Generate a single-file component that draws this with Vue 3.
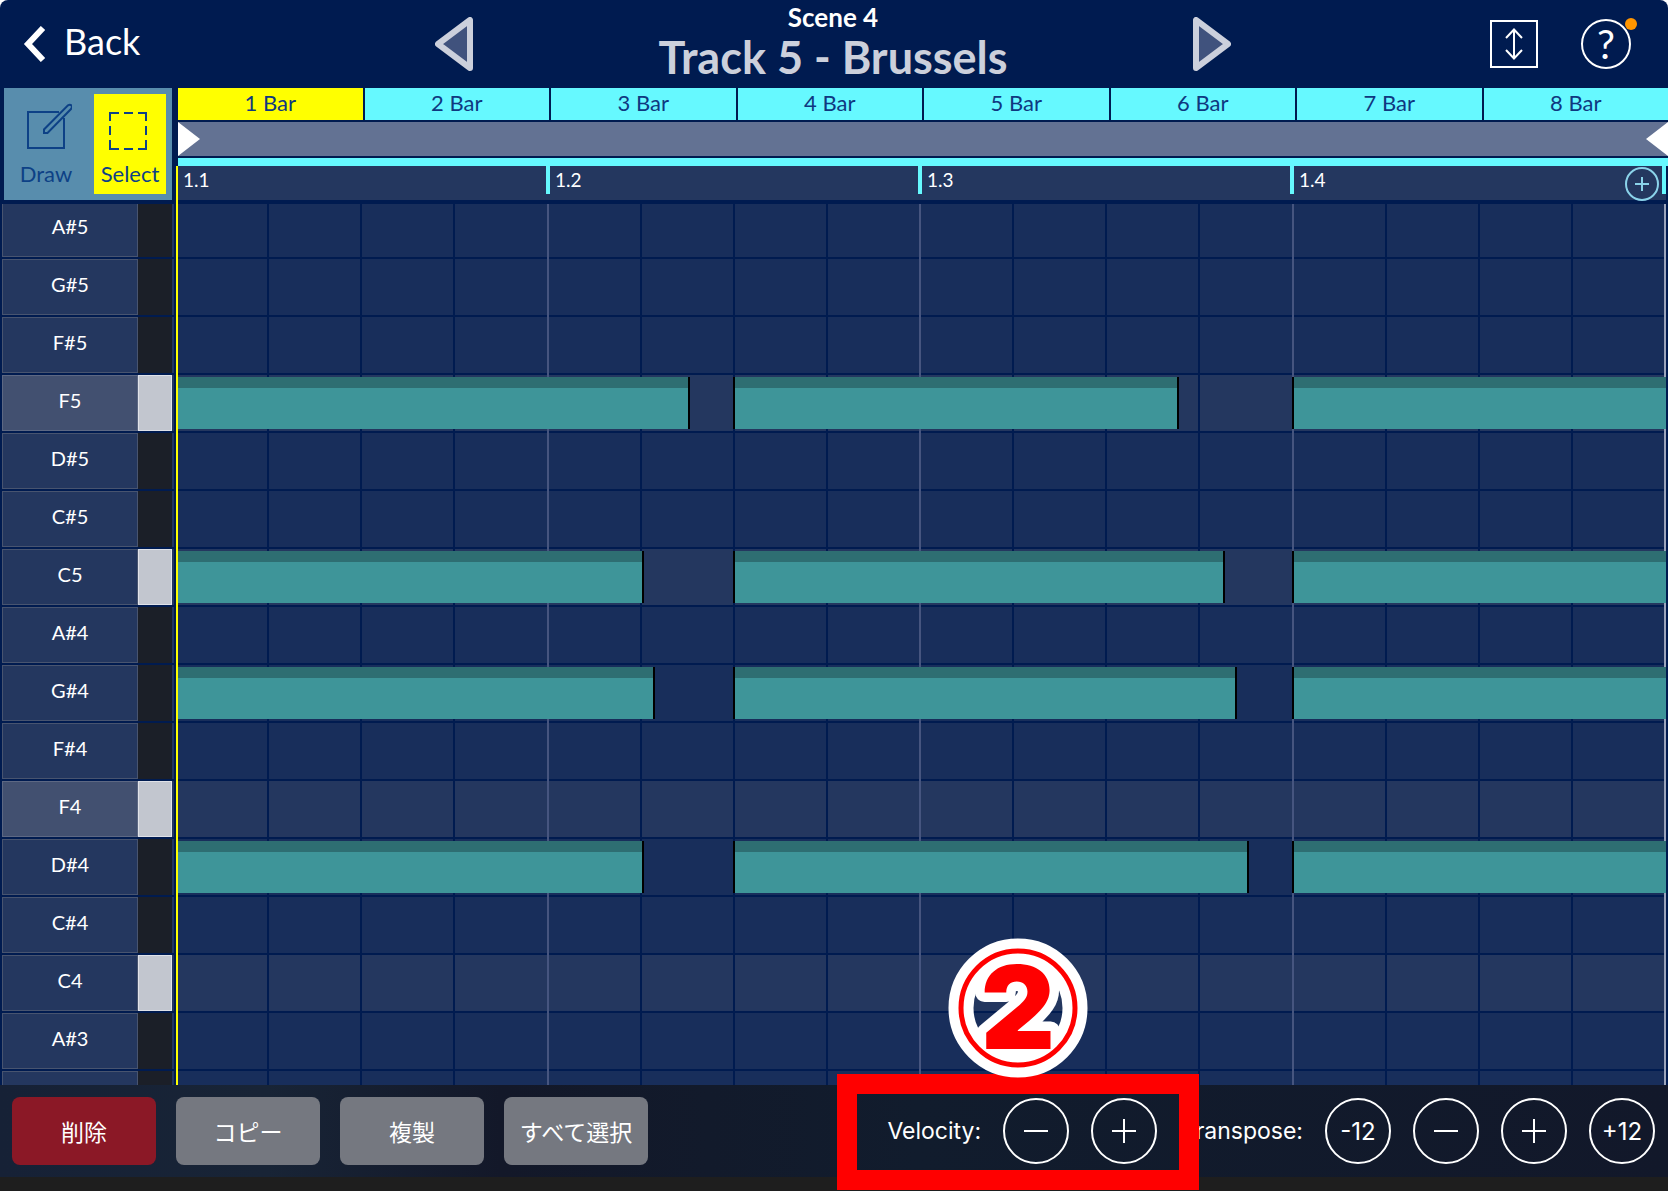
<script setup>
import { ref } from "vue";

const modo = ref("select");
const compasso = ref(1);
const compassos = [1, 2, 3, 4, 5, 6, 7, 8];
const tempos = ["1.1", "1.2", "1.3", "1.4"];
const PASSOS = 16;

// inicio e fim das notas em semicolcheias
const linhas = [
  { nome: "A#5" },
  { nome: "G#5" },
  { nome: "F#5" },
  { nome: "F5", branca: true, raiz: true, notas: [[0, 5.52], [6, 10.79], [12, 16]] },
  { nome: "D#5" },
  { nome: "C#5" },
  { nome: "C5", branca: true, notas: [[0, 5.03], [6, 11.29], [12, 16]] },
  { nome: "A#4" },
  { nome: "G#4", notas: [[0, 5.14], [6, 11.41], [12, 16]] },
  { nome: "F#4" },
  { nome: "F4", branca: true, raiz: true },
  { nome: "D#4", notas: [[0, 5.03], [6, 11.54], [12, 16]] },
  { nome: "C#4" },
  { nome: "C4", branca: true },
  { nome: "A#3" },
  { nome: "" }
];

function posicao([inicio, fim]) {
  return {
    left: (inicio / PASSOS) * 100 + "%",
    width: ((fim - inicio) / PASSOS) * 100 + "%"
  };
}
</script>

<template>
  <div class="app">
    <header class="topo">
      <button class="voltar">
        <svg width="24" height="36" viewBox="0 0 24 36"><path d="M20 2 L5 18 L20 34" fill="none" stroke="#fff" stroke-width="6" /></svg>
        <span>Back</span>
      </button>
      <div class="faixa">
        <button aria-label="Previous track">
          <svg width="38" height="54" viewBox="0 0 38 54"><path d="M35 3 V51 L3 27 Z" fill="#40527d" stroke="#ccd0dc" stroke-width="6" stroke-linejoin="round" /></svg>
        </button>
        <div class="titulo">
          <p>Scene 4</p>
          <h1>Track 5 - Brussels</h1>
        </div>
        <button aria-label="Next track">
          <svg width="38" height="54" viewBox="0 0 38 54"><path d="M3 3 V51 L35 27 Z" fill="#40527d" stroke="#ccd0dc" stroke-width="6" stroke-linejoin="round" /></svg>
        </button>
      </div>
      <div class="icones">
        <button aria-label="Expand">
          <svg width="48" height="48" viewBox="0 0 48 48" fill="none" stroke="#fff"><rect x="1" y="1" width="46" height="46" stroke-width="2" /><path d="M24 9.500 V38.500 M16 18 L24 9.500 L32 18 M16 30 L24 38.500 L32 30" stroke-width="2" /></svg>
        </button>
        <button class="ajuda" aria-label="Help">
          <span>?</span>
          <i class="aviso"></i>
        </button>
      </div>
    </header>

    <section class="cabecalho">
      <div class="ferramentas">
        <button :class="{ ativo: modo === 'draw' }" @click="modo = 'draw'">
          <svg width="52" height="48" viewBox="-6 1 52 48" fill="none" stroke="#0d4186" stroke-width="2"><path d="M33 10 H2 V46 H38 V16" /><path d="M18 31 V27.500 L42 3.300 Q44 2 45.500 3.500 Q46.500 5 45 7 L21.500 31 Z" /></svg>
          <span>Draw</span>
        </button>
        <button :class="{ ativo: modo === 'select' }" @click="modo = 'select'">
          <svg width="48" height="48" viewBox="2 1 48 48" fill="none" stroke="#0d4186" stroke-width="2"><path d="M6 19 V11 H15 M20 11 H29 M34 11 H42 V19 M42 24 V33 M42 38 V47 H34 M29 47 H20 M15 47 H6 V38 M6 33 V24" /></svg>
          <span>Select</span>
        </button>
      </div>
      <div class="linha-tempo">
        <nav class="compassos">
          <button v-for="n in compassos" :key="n" :class="{ ativo: n === compasso }" @click="compasso = n">{{ n }} Bar</button>
        </nav>
        <div class="intervalo">
          <svg width="22" height="34" viewBox="0 0 22 34"><path d="M0 0 L22 17 L0 34 Z" fill="#fff" /></svg>
          <svg width="22" height="34" viewBox="0 0 22 34"><path d="M22 0 L0 17 L22 34 Z" fill="#fff" /></svg>
        </div>
        <div class="trilho"></div>
        <div class="regua">
          <span v-for="t in tempos" :key="t">{{ t }}</span>
          <button aria-label="Add">
            <svg width="34" height="34" viewBox="0 0 34 34" fill="none" stroke="#8bd3ea" stroke-width="2"><circle cx="17" cy="17" r="16" /><path d="M10 17 H24 M17 10 V24" /></svg>
          </button>
        </div>
      </div>
    </section>

    <main class="rolo">
      <div class="teclas">
        <div v-for="l in linhas" :key="l.nome" class="tecla" :class="{ branca: l.branca, raiz: l.raiz }">
          <span class="nome">{{ l.nome }}</span>
          <i class="marfim"></i>
        </div>
      </div>
      <div class="grade">
        <div class="tempos"><i v-for="t in tempos" :key="t"></i></div>
        <div v-for="l in linhas" :key="l.nome" class="pista" :class="{ clara: l.branca }">
          <i v-for="p in PASSOS" :key="p" class="passo"></i>
          <div v-for="(n, i) in l.notas" :key="i" class="nota" :class="{ primeira: n[0] === 0, ultima: n[1] === PASSOS }" :style="posicao(n)"></div>
        </div>
      </div>
    </main>

    <footer class="rodape">
      <div class="acoes">
        <button class="apagar">削除</button>
        <button>コピー</button>
        <button>複製</button>
        <button>すべて選択</button>
      </div>
      <div class="ajuste velocidade">
        <span>Velocity:</span>
        <button aria-label="Velocity down"><svg width="24" height="24" viewBox="0 0 24 24"><path d="M0 12 H24" stroke="#fff" stroke-width="2" /></svg></button>
        <button aria-label="Velocity up"><svg width="24" height="24" viewBox="0 0 24 24"><path d="M0 12 H24 M12 0 V24" stroke="#fff" stroke-width="2" /></svg></button>
        <div class="destaque">
          <svg class="numero" width="140" height="140" viewBox="0 0 140 140">
            <circle cx="70" cy="70" r="57" fill="none" stroke="#fff" stroke-width="25" />
            <text x="70" y="111" text-anchor="middle" fill="#f00" stroke="#fff" stroke-width="19" stroke-linejoin="round" paint-order="stroke">2</text>
            <circle cx="70" cy="70" r="57" fill="none" stroke="#f00" stroke-width="5" />
          </svg>
        </div>
      </div>
      <div class="ajuste">
        <span>Transpose:</span>
        <button>-12</button>
        <button aria-label="Transpose down"><svg width="24" height="24" viewBox="0 0 24 24"><path d="M0 12 H24" stroke="#fff" stroke-width="2" /></svg></button>
        <button aria-label="Transpose up"><svg width="24" height="24" viewBox="0 0 24 24"><path d="M0 12 H24 M12 0 V24" stroke="#fff" stroke-width="2" /></svg></button>
        <button>+12</button>
      </div>
    </footer>
  </div>
</template>

<style>
body {
  background: #fff;
}
</style>

<style scoped>
.app {
  display: flex;
  flex-direction: column;
  height: 100vh;
  border-radius: 8px 8px 0 0;
  overflow: hidden;
  background: #001b50;
  color: #fff;
  font-family: Lato, "Noto Sans CJK JP", sans-serif;
}

button {
  padding: 0;
  border: none;
  background: none;
  color: inherit;
  font: inherit;
  cursor: pointer;
}

svg {
  display: block;
}

/* Topo */
.topo {
  display: grid;
  grid-template-columns: 1fr 796px 1fr;
  align-items: center;
  height: 88px;
  flex: none;
  padding-right: 2px;
}

.voltar {
  display: flex;
  align-items: center;
  gap: 17px;
  padding-left: 23px;
  font-size: 36px;
  line-height: 40px;
}

.voltar span {
  padding-bottom: 6px;
}

.faixa {
  display: flex;
  align-items: center;
  justify-content: space-between;
}

.titulo {
  text-align: center;
}

.titulo p {
  margin: 0;
  font-size: 26px;
  line-height: 32px;
  font-weight: 700;
}

.titulo h1 {
  margin: 0;
  padding-bottom: 6px;
  font-size: 45px;
  line-height: 48px;
  font-weight: 700;
  color: #ccd0dc;
}

.icones {
  display: flex;
  justify-content: flex-end;
  align-items: center;
  gap: 43px;
  padding-right: 35px;
}

.ajuda {
  position: relative;
  width: 50px;
  height: 50px;
  box-sizing: border-box;
  border: 2px solid #fff;
  border-radius: 50%;
  font-size: 40px;
  line-height: 44px;
}

.aviso {
  position: absolute;
  top: -3px;
  right: -8px;
  width: 12px;
  height: 12px;
  border-radius: 50%;
  background: #ff9500;
}

/* Ferramentas e regua */
.cabecalho {
  display: flex;
  gap: 6px;
  height: 112px;
  flex: none;
  padding-bottom: 4px;
}

.ferramentas {
  display: flex;
  gap: 12px;
  width: 168px;
  box-sizing: border-box;
  margin-left: 4px;
  padding: 6px;
  background: #588dad;
  color: #0d4186;
  font-size: 22px;
  line-height: 28px;
}

.ferramentas button {
  flex: 1 1 0;
  min-width: 0;
  display: flex;
  flex-direction: column;
  align-items: center;
  justify-content: flex-end;
  gap: 9px;
  padding-bottom: 6px;
}

.ferramentas .ativo {
  background: #ff0;
}

.linha-tempo {
  flex: 1;
  display: flex;
  flex-direction: column;
}

.compassos {
  display: flex;
  gap: 2px;
  height: 32px;
}

.compassos button {
  flex: 1;
  padding-bottom: 3px;
  background: #66f9ff;
  color: #0f3880;
  font-size: 22px;
}

.compassos .ativo {
  background: #ff0;
}

.intervalo {
  display: flex;
  justify-content: space-between;
  height: 34px;
  margin: 2px 0;
  background: #637293;
}

.trilho {
  height: 8px;
  background: #66f9ff;
}

.regua {
  position: relative;
  display: flex;
  flex: 1;
  margin-right: 2px;
  background: #24375f;
  font-size: 19px;
  line-height: 28px;
}

.regua::before {
  content: "";
  position: absolute;
  top: 0;
  bottom: -4px;
  left: -2px;
  width: 2px;
  background: #ff0;
}

.regua span {
  flex: 1;
  height: 28px;
  padding-left: 5px;
  border-right: 4px solid #66f9ff;
}

.regua button {
  position: absolute;
  top: 1px;
  right: 7px;
}

/* Piano roll */
.rolo {
  display: flex;
  flex: 1;
  gap: 2px;
  min-height: 0;
  overflow: hidden;
}

.teclas {
  width: 172px;
  margin: -3px 0 0 2px;
}

.tecla {
  display: flex;
  height: 56px;
  margin-bottom: 2px;
  border-right: 2px solid #24375f;
  box-sizing: border-box;
}

.nome {
  flex: 1;
  box-sizing: border-box;
  border: 1px solid #48546f;
  background: #24375f;
  font-size: 20px;
  line-height: 48px;
  text-align: center;
}

.raiz .nome {
  background: #425070;
  border-color: #5d6883;
}

.marfim {
  width: 34px;
  box-sizing: border-box;
  background: #1b1f28;
}

.branca .marfim {
  border: 1px solid #e0e2e8;
  background: #c2c6cf;
}

.grade {
  position: relative;
  flex: 1;
  margin: -3px 2px 0 0;
}

.grade::after {
  content: "";
  position: absolute;
  inset: 0 auto 0 0;
  width: 2px;
  background: #ff0;
}

.tempos {
  position: absolute;
  inset: 0;
  display: flex;
}

.tempos i {
  flex: 1;
  border-right: 2px solid #46557f;
}

.tempos i:last-child {
  border-color: #9ba4bb;
}

.pista {
  position: relative;
  display: flex;
  height: 56px;
  margin-bottom: 2px;
}

.passo {
  flex: 1;
  background: #182e5b;
  border-right: 2px solid #001b50;
}

.passo:nth-child(4n) {
  border-color: transparent;
  background-clip: padding-box;
}

.clara .passo {
  background-color: #24375f;
}

.nota {
  position: absolute;
  top: 2px;
  height: 52px;
  box-sizing: border-box;
  margin-left: -2px;
  border: solid #000;
  border-width: 0 2px;
  background: linear-gradient(#2e6e72 11px, #3e9599 11px);
}

.primeira {
  margin-left: 0;
}

.ultima {
  border-right: none;
  box-sizing: content-box;
}

/* Rodape */
.rodape {
  display: flex;
  align-items: center;
  height: 92px;
  flex: none;
  padding: 0 13px 0 12px;
  border-bottom: 14px solid #1e1e1e;
  background: linear-gradient(90deg, #162136, #182436 16%, #131829 30%, #111c2d 55%, #12182a);
  font-family: Inter, "Noto Sans CJK JP", sans-serif;
  font-size: 23px;
}

.acoes {
  display: flex;
  gap: 20px;
  margin-right: auto;
}

.acoes button {
  width: 144px;
  height: 68px;
  border-radius: 8px;
  background: #757880;
}

.acoes .apagar {
  background: #8b1826;
}

.ajuste {
  display: flex;
  align-items: center;
  gap: 22px;
}

.ajuste button {
  display: flex;
  align-items: center;
  justify-content: center;
  width: 66px;
  height: 66px;
  box-sizing: border-box;
  border: 2px solid #fff;
  border-radius: 50%;
  font-size: 24px;
}

.velocidade {
  position: relative;
  z-index: 1;
  margin-right: 25px;
}

.destaque {
  position: absolute;
  inset: -24px -42px -26px -50px;
  border: 20px solid #f00;
  pointer-events: none;
}

.numero {
  position: absolute;
  left: 50%;
  bottom: 100%;
  margin: 0 0 16px -70px;
  overflow: visible;
}

.numero text {
  font-family: Inter, sans-serif;
  font-size: 115px;
  font-weight: 900;
}
</style>
